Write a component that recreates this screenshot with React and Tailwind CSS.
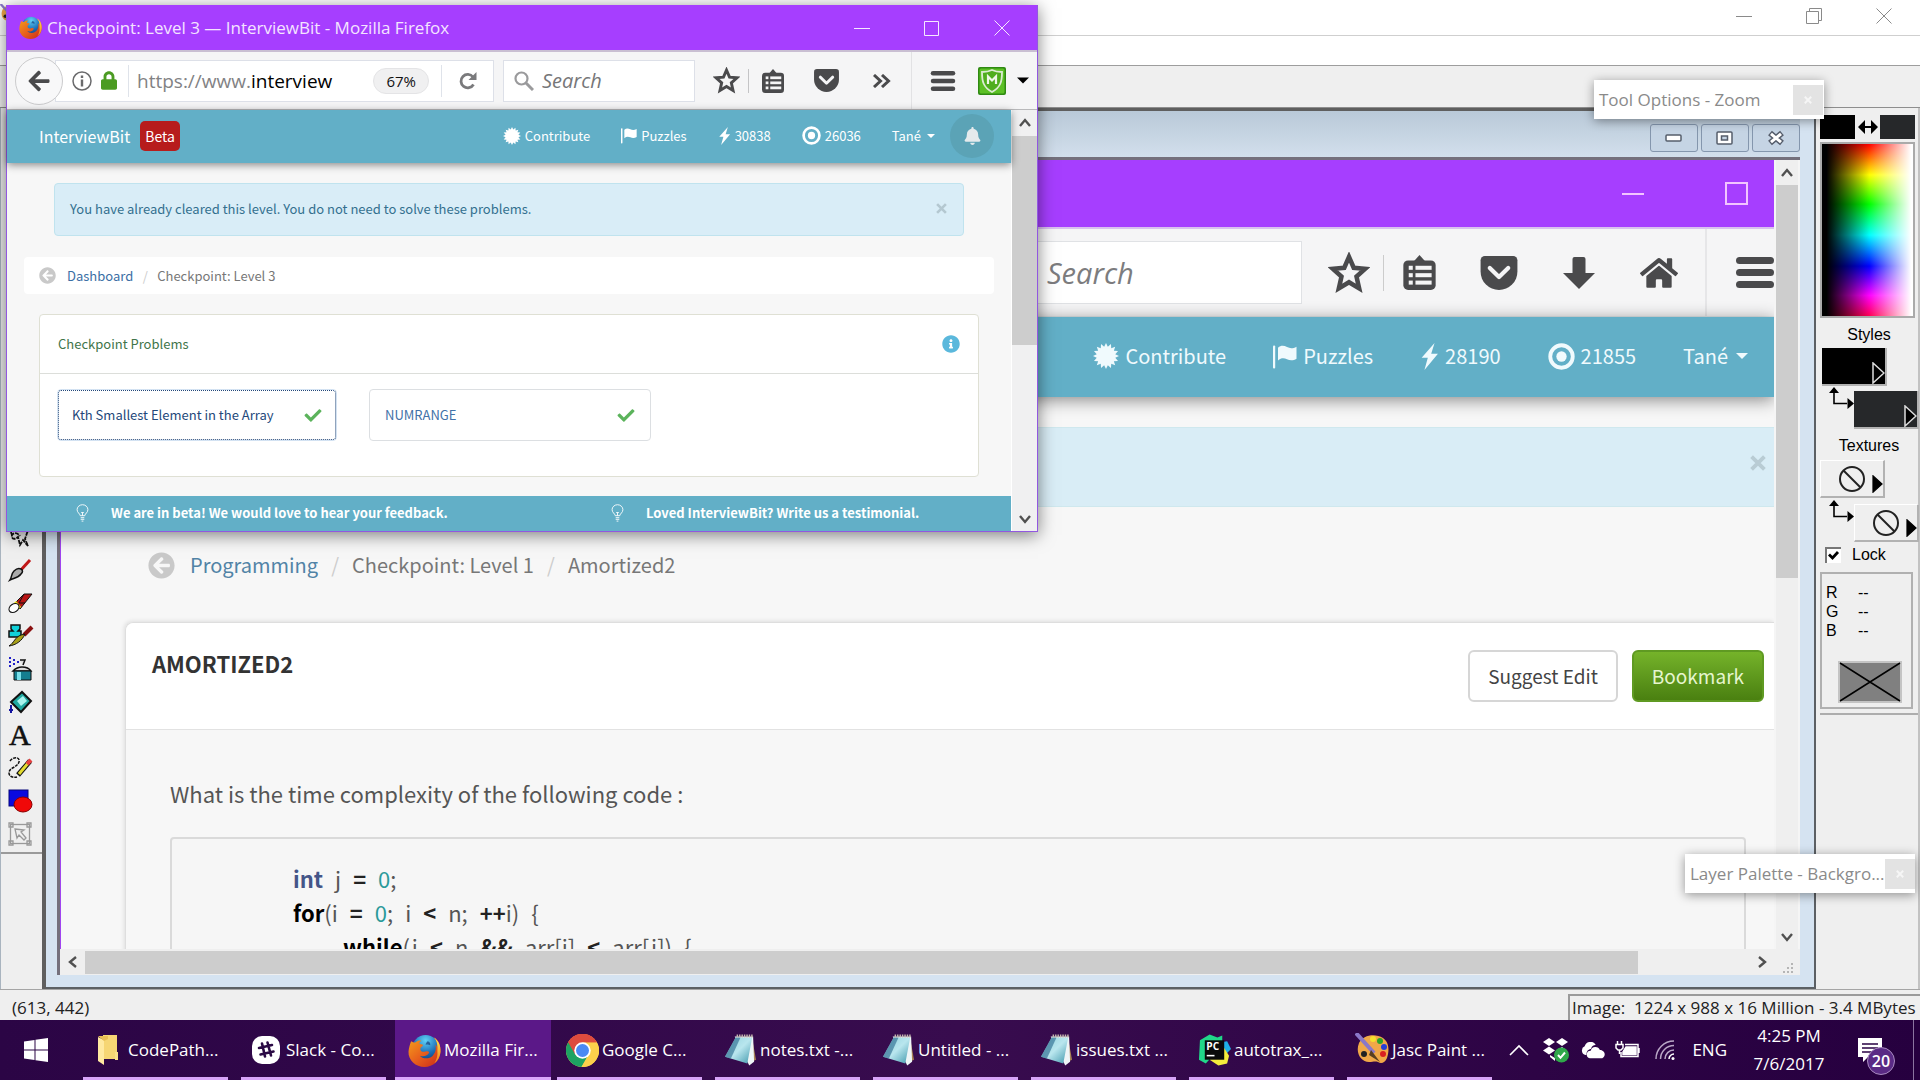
import React from "react";
import { FaBell, FaCheck, FaInfoCircle, FaLock, FaArrowLeft, FaArrowCircleLeft, FaHome } from "react-icons/fa";

const UI = "font-['Open_Sans','Noto_Sans',sans-serif]";
const SITE = "font-['Noto_Sans_CJK_SC','Open_Sans',sans-serif]";
const CLASSIC = "font-['Liberation_Sans',sans-serif]";

/* ---------- icons ---------- */

const burst = Array.from({ length: 32 }, (_, i) => {
  const r = i % 2 ? 8 : 11;
  const a = (i * Math.PI) / 16;
  return `${(12 + r * Math.sin(a)).toFixed(2)},${(12 - r * Math.cos(a)).toFixed(2)}`;
}).join(" ");

function Burst({ className }) {
  return (
    <svg viewBox="1 1 22 22" className={className} fill="currentColor" aria-hidden="true">
      <polygon points={burst} />
    </svg>
  );
}

function Flag({ className }) {
  return (
    <svg viewBox="0 0 24 24" className={className} fill="currentColor" aria-hidden="true">
      <rect x="0" y="1" width="2.2" height="23" rx="1" />
      <path d="M5 3.200C8 .6 11 1 14 2.600c3 1.600 6 1.600 9.500-.4v12c-3 2-6.500 2-9.500.6-3-1.400-6-1.400-9 1.200z" />
    </svg>
  );
}

function Bolt({ className }) {
  return (
    <svg viewBox="0 0 16 24" className={className} fill="currentColor" aria-hidden="true">
      <path d="M12.500 0 1 13h5.500L3.500 24 15.500 9.500H9.500z" />
    </svg>
  );
}

function Target({ className }) {
  return (
    <svg viewBox="0 0 24 24" className={className} aria-hidden="true">
      <circle cx="12" cy="12" r="10" fill="none" stroke="currentColor" strokeWidth="3.400" />
      <circle cx="12" cy="12" r="4.600" fill="currentColor" />
    </svg>
  );
}

function Caret({ className }) {
  return (
    <svg viewBox="0 0 12 6" className={className} fill="currentColor" aria-hidden="true">
      <path d="M0 0h12L6 6z" />
    </svg>
  );
}

function Bulb() {
  return (
    <svg viewBox="0 0 14 20" className="h-[18px] w-[13px] shrink-0" fill="none" stroke="white" strokeWidth="1" aria-hidden="true">
      <path d="M4.500 13C4 10.500 1 9.500 1 6.300a6 5.500 0 0 1 12 0C13 9.500 10 10.500 9.500 13zM5.500 9.500h3M7 9.500V13M5 15.200h4M5 17h4M6 19h2" />
    </svg>
  );
}

function Star({ className }) {
  return (
    <svg viewBox="0 0 24 24" className={className} fill="none" stroke="currentColor" strokeWidth="2.600" aria-hidden="true">
      <path d="M12 2.800 14.700 9l6.600.6-5 4.500 1.500 6.700L12 17.300l-5.800 3.500 1.500-6.700-5-4.500L9.300 9z" />
    </svg>
  );
}

function ListIcon({ className }) {
  return (
    <svg viewBox="0 0 24 26" className={className} aria-hidden="true">
      <path d="M8 4.500 12 0l4 4.500z" fill="currentColor" />
      <rect x="0" y="4" width="24" height="22" rx="3.500" fill="currentColor" />
      <g fill="#f5f5f6">
        <rect x="4" y="8" width="3" height="3" /><rect x="9" y="8" width="12" height="3" />
        <rect x="4" y="13.500" width="3" height="3" /><rect x="9" y="13.500" width="12" height="3" />
        <rect x="4" y="19" width="3" height="3" /><rect x="9" y="19" width="12" height="3" />
      </g>
    </svg>
  );
}

function Pocket({ className }) {
  return (
    <svg viewBox="0 0 26 24" className={className} aria-hidden="true">
      <path d="M3 0h20a3 3 0 0 1 3 3v8a13 13 0 0 1-26 0V3a3 3 0 0 1 3-3z" fill="currentColor" />
      <path d="m6.500 8.500 6.500 6.300 6.500-6.300" fill="none" stroke="#f5f5f6" strokeWidth="3" strokeLinecap="round" strokeLinejoin="round" />
    </svg>
  );
}

function Burger({ className }) {
  return (
    <svg viewBox="0 0 38 31" className={className} fill="currentColor" aria-hidden="true">
      <rect width="38" height="7" rx="3.500" /><rect y="12" width="38" height="7" rx="3.500" /><rect y="24" width="38" height="7" rx="3.500" />
    </svg>
  );
}

function Chevron({ dir = "up", className = "h-3 w-3" }) {
  const d = { up: "M1 9 6 3l5 6", down: "M1 3l5 6 5-6", left: "M9 1 3 6l6 5", right: "M3 1l6 5-6 5" }[dir];
  return (
    <svg viewBox="0 0 12 12" className={className} fill="none" stroke="#505050" strokeWidth="2.400" aria-hidden="true">
      <path d={d} />
    </svg>
  );
}

function Firefox({ className }) {
  return (
    <svg viewBox="0 0 32 32" className={className} aria-hidden="true">
      <defs>
        <radialGradient id="ffGlobe" cx=".5" cy=".2" r=".8"><stop offset="0" stopColor="#5fd0f5" /><stop offset=".6" stopColor="#1c6fb8" /><stop offset="1" stopColor="#123a78" /></radialGradient>
        <linearGradient id="ffFox" x1="0" y1="0" x2="1" y2="1"><stop offset="0" stopColor="#f4a01c" /><stop offset=".5" stopColor="#e8601c" /><stop offset="1" stopColor="#c8281a" /></linearGradient>
        <linearGradient id="ffTail" x1="0" y1="0" x2="0" y2="1"><stop offset="0" stopColor="#ffe34d" /><stop offset="1" stopColor="#f0801c" /></linearGradient>
      </defs>
      <circle cx="17" cy="14" r="13" fill="url(#ffGlobe)" />
      <path d="M3 7c1.500 1 3 1.500 4 1.300C9 6.500 11 6 13 6.500c-1.500 1-2 2-2 3l3.500 1c.5 1-1.500 2-2.500 3-.5 3 2 4.500 5 3.500 2-.7 3.500 0 3.500 1-1.500 3.500-6 4.500-9 3 3 3.500 9 3.500 12.500 0 3-3 3.500-7 2.500-10.500 1.500 1 2 2.500 2.500 4C29 9 27.500 6 25 3.500c4.500 2.500 7 8 6.500 14C31 26 24.500 32 16 32S0 25.500.5 17C.8 13 2 10 3 7z" fill="url(#ffFox)" />
      <path d="M25 3.500c4.500 2.500 7 8 6.500 14-.4 4.500-2.500 8.500-6 11 2.500-4 3.500-8 3-12C29 9 27.500 6 25 3.500z" fill="url(#ffTail)" />
      <path d="M19 7c2 .5 3 2 2.500 4-1.500-1-3-1-4.500-.5.500-1.500 1-2.500 2-3.500z" fill="#163f7d" opacity=".7" />
    </svg>
  );
}

function Chrome({ className }) {
  return (
    <svg viewBox="0 0 32 32" className={className} aria-hidden="true">
      <circle cx="16" cy="16" r="16" fill="#fcd04b" />
      <path d="M16 16 2.100 8A16 16 0 0 1 29.900 8z" fill="#dd4b3e" />
      <path d="M2.100 8A16 16 0 0 0 15 32l7-12.500-6-3.500z" fill="#1da362" />
      <path d="M16 8h13.900A16 16 0 0 1 15 32l7.500-12z" fill="#fcd04b" />
      <path d="M2.100 8 9 20l7-12h13.900A16 16 0 0 0 2.100 8z" fill="#dd4b3e" />
      <circle cx="16" cy="16" r="8" fill="#fff" /><circle cx="16" cy="16" r="6.300" fill="#4a8af4" />
    </svg>
  );
}

function Folder() {
  return (
    <svg viewBox="0 0 20 30" className="h-[30px] w-5" aria-hidden="true">
      <path d="M5 0h14v24H5z" fill="#f6d674" /><path d="M0 2l6 3v25l-6-4z" fill="#ffe9a0" /><path d="M0 1h10v3l-4 2z" fill="#e8bf55" /><path d="M17 17h3v8h-3z" fill="#fbe08a" />
    </svg>
  );
}

function Slack() {
  return (
    <svg viewBox="0 0 28 28" className="h-7 w-7" aria-hidden="true">
      <rect width="28" height="28" rx="10" fill="#fff" />
      <g stroke="#2b0a45" strokeWidth="2.600" strokeLinecap="round"><path d="M10 7.500 13 20.500M15.500 6.500 19 19.500M7 12l13-3M8.500 18.500l13-3" /></g>
    </svg>
  );
}

function Notepad() {
  return (
    <svg viewBox="0 0 34 32" className="h-8 w-[33px]" aria-hidden="true">
      <defs><linearGradient id="np" x1="0" y1="0" x2="1" y2="1"><stop offset="0" stopColor="#8fd0dc" /><stop offset=".5" stopColor="#b9e6ee" /><stop offset="1" stopColor="#3f97ac" /></linearGradient></defs>
      <path d="M29 4l4 22-6 3z" fill="#a98255" /><path d="M11 2h19l1 26-5 4z" fill="#eef5f7" /><path d="M12 3h17L24 30 1 23z" fill="url(#np)" /><path d="M12 3 1 23l6 2L17 3z" fill="#2f6f92" opacity=".65" /><path d="M13 1.500h17" stroke="#c4b8ae" strokeWidth="3" strokeDasharray="1.500 1" />
    </svg>
  );
}

function PyCharm() {
  return (
    <svg viewBox="0 0 34 32" className="h-8 w-[33px]" aria-hidden="true">
      <path d="M2 6 12 0l8 3 5-2v10L8 30l-7-4z" fill="#21d789" /><path d="M24 8l6-1 4 8-5 5z" fill="#1fb0e8" /><path d="M12 26 27 14l5 8-2 8-9 2z" fill="#f5ec3c" />
      <rect x="7" y="6" width="20" height="20" fill="#0a0a0a" />
      <text x="8.500" y="16" fontSize="10.500" fontWeight="700" fill="#fff" fontFamily="Open Sans">PC</text>
      <rect x="9" y="21" width="8" height="1.600" fill="#fff" />
    </svg>
  );
}

function Palette({ className = "h-[34px] w-[34px]" }) {
  return (
    <svg viewBox="0 0 34 34" className={className} aria-hidden="true">
      <path d="M4 10C8 2 20 0 28 5c7 5 6 14 4 20-2 5-6 6-9 4-3-1-5 0-9 0C6 29 0 20 4 10z" fill="#f0a848" />
      <circle cx="18" cy="6" r="3" fill="#f4e02c" /><circle cx="25" cy="8" r="3" fill="#2aa52a" /><circle cx="29" cy="14" r="3" fill="#2440d8" /><circle cx="28" cy="21" r="3" fill="#d82020" /><circle cx="9" cy="21" r="3" fill="#222" />
      <path d="M1 0 19 20" stroke="#8a78c8" strokeWidth="4" /><path d="M16 17l9 12-11-7z" fill="#5a4020" />
    </svg>
  );
}

/* ---------- shared pieces ---------- */

function WinControls({ restore, className = "", tone }) {
  const box = "flex h-full w-[70px] items-center justify-center";
  return (
    <div className={`flex h-full ${tone} ${className}`}>
      <button aria-label="Minimize" className={box}><svg viewBox="0 0 16 16" className="h-4 w-4" stroke="currentColor"><path d="M0 8.500h16" /></svg></button>
      <button aria-label="Maximize" className={box}>
        <svg viewBox="0 0 16 16" className="h-4 w-4" stroke="currentColor" fill="none">
          {restore ? <path d="M.5 3.500h12v12H.5zM3.500 3.500v-3h12v12h-3" /> : <path d="M.5 1.500h14v14H.5z" />}
        </svg>
      </button>
      <button aria-label="Close" className={box}><svg viewBox="0 0 16 16" className="h-4 w-4" stroke="currentColor"><path d="m.5.5 15 15M15.500.5l-15 15" /></svg></button>
    </div>
  );
}

function NavItem({ icon, label, big }) {
  return (
    <a href="#" className={big ? "flex items-center gap-1.5" : "flex items-center gap-1"}>
      {icon}
      <span>{label}</span>
    </a>
  );
}

function Cross({ className }) {
  return (
    <svg viewBox="0 0 10 10" className={className} stroke="currentColor" strokeWidth="2.400" aria-hidden="true"><path d="m1 1 8 8M9 1 1 9" /></svg>
  );
}

/* ---------- Firefox window ---------- */

function FirefoxWindow() {
  return (
    <section className="absolute left-[6px] top-[5px] flex h-[527px] w-[1032px] flex-col border border-t-0 border-[#9257e0] bg-[#f7f7f7] shadow-[0_3px_16px_rgba(0,0,0,0.5)]">
      <header className="flex h-[47px] shrink-0 items-center border-b-2 border-[#c9bfd2] bg-[#a63eff] pl-3">
        <Firefox className="h-[23px] w-[23px]" />
        <h1 className={`ml-[5px] flex-1 text-[17px] leading-6 text-[#f4e4ff] ${UI}`}>Checkpoint: Level 3 — InterviewBit - Mozilla Firefox</h1>
        <WinControls tone="text-[#f6e8ff]" />
      </header>

      <div className={`flex h-[58px] shrink-0 items-center border-b border-[#b9b9bb] bg-[#f5f5f6] text-[#4a4a4c] ${UI}`}>
        <button aria-label="Back" className="z-10 ml-2 flex h-12 w-12 items-center justify-center rounded-full border border-[#cbcbcd] bg-[#f8f8f9]">
          <FaArrowLeft className="h-6 w-6" />
        </button>
        <div className="-ml-2 flex h-[42px] w-[439px] items-center border border-[#dde0e8] bg-white pl-[16px]">
          <svg viewBox="0 0 20 20" className="h-5 w-5 text-[#6a6a6c]" fill="none" stroke="currentColor" aria-hidden="true"><circle cx="10" cy="10" r="9" strokeWidth="1.500" /><path d="M10 4.500v2.500M10 8.500v7" strokeWidth="2.400" /></svg>
          <FaLock className="ml-[9px] h-[19px] w-4 text-[#4b9b22]" />
          <span className="ml-[11px] h-[32px] w-px bg-[#dfe3ea]" />
          <span className="ml-2 flex-1 text-[19px] leading-7 text-[#828284]">https://www.<span className="text-black">interview</span></span>
          <span className="rounded-full border border-[#e4e4e6] bg-[#f0f0f1] px-3 text-[15px] leading-6 text-[#111]">67%</span>
          <span className="ml-3 h-[32px] w-px bg-[#dfe3ea]" />
          <button aria-label="Reload" className="flex w-[51px] justify-center">
            <svg viewBox="0 0 18 18" className="h-[18px] w-[18px] text-[#7a7a7c]" fill="none" stroke="currentColor" strokeWidth="2.800" aria-hidden="true"><path d="M14.500 12.500A6.700 6.700 0 1 1 14 5" /><path d="M17.500 0v8h-8z" fill="currentColor" stroke="none" /></svg>
          </button>
        </div>
        <label className="ml-[9px] flex h-[42px] w-[192px] items-center border border-[#dde0e8] bg-white pl-[10px]">
          <svg viewBox="0 0 20 20" className="h-5 w-5 shrink-0" fill="none" stroke="#9a9a9c" aria-hidden="true"><circle cx="7.500" cy="7.500" r="6" strokeWidth="2.200" /><path d="m12 12 7 7" strokeWidth="3" /></svg>
          <input aria-label="Search the web" placeholder="Search" className="ml-2 w-full bg-transparent text-[20px] italic leading-7 outline-none placeholder:text-[#767678]" />
        </label>
        <button aria-label="Bookmark this page" className="flex w-[53px] justify-center pl-2.5"><Star className="h-[27px] w-[27px]" /></button>
        <span className="h-6 w-px bg-[#c4c4c6]" />
        <button aria-label="Bookmarks list" className="flex w-12 justify-center"><ListIcon className="h-6 w-[22px]" /></button>
        <button aria-label="Pocket" className="flex w-[58px] justify-center"><Pocket className="h-[23px] w-[25px]" /></button>
        <button aria-label="More tools" className="flex w-[56px] justify-center pr-0.5">
          <svg viewBox="0 0 18 14" className="h-[14px] w-[18px]" fill="none" stroke="currentColor" strokeWidth="3" aria-hidden="true"><path d="m1 1 6.500 6L1 13M9 1l6.500 6L9 13" /></svg>
        </button>
        <span className="h-full w-px bg-[#e2e2e4]" />
        <button aria-label="Menu" className="ml-[18px]"><Burger className="h-5 w-[26px]" /></button>
        <button aria-label="Site advisor" className="ml-[22px]">
          <svg viewBox="0 0 28 28" className="h-7 w-7" aria-hidden="true">
            <rect width="28" height="28" rx="2" fill="#2f8a12" /><rect x="1.500" y="1.500" width="25" height="25" rx="1.500" fill="#5cc025" />
            <path d="M14 3c3 1.500 6 2 10 2 0 9-1 15-10 20C5 20 4 14 4 5c4 0 7-.5 10-2z" fill="#4fae1e" stroke="#dcebd3" strokeWidth="1.800" />
            <path d="M10 17V9.500l4 4 4-4V17" fill="none" stroke="#eef7e8" strokeWidth="2.200" />
          </svg>
        </button>
        <Caret className="ml-[11px] h-[7px] w-3 text-black" />
      </div>

      <div className="flex min-h-0 flex-1">
        <div className={`flex min-w-0 flex-1 flex-col text-[13px] leading-5 ${SITE}`}>
          <nav className="z-10 flex h-[53px] shrink-0 items-center bg-[#62afc7] pb-0.5 pl-8 pr-[17px] text-white shadow-[0_2px_8px_rgba(0,0,0,0.45)]">
            <a href="#" className="text-[16px]">InterviewBit</a>
            <span className="ml-2.5 rounded-[5px] bg-[#b71c1c] px-[5px] text-[14px] leading-[30px]">Beta</span>
            <div className="ml-auto flex items-center gap-[31px]">
              <NavItem icon={<Burst className="h-[18px] w-[18px]" />} label="Contribute" />
              <NavItem icon={<Flag className="h-[17px] w-4" />} label="Puzzles" />
              <NavItem icon={<Bolt className="h-[18px] w-[13px]" />} label="30838" />
              <NavItem icon={<Target className="h-[19px] w-[19px]" />} label="26036" />
              <button className="flex items-center gap-1.5">Tané<Caret className="h-1 w-2" /></button>
            </div>
            <button aria-label="Notifications" className="ml-[15px] flex h-11 w-11 items-center justify-center rounded-full bg-[#5ba3b6]"><FaBell className="h-[18px] w-[17px] text-[#e4eaec]" /></button>
          </nav>

          <div className="mx-[47px] mt-5 flex h-[53px] shrink-0 items-center rounded border border-[#c0e3ee] bg-[#d9edf7] pb-0.5 pl-[15px] pr-4 text-[#33708f]">
            <p className="flex-1">You have already cleared this level. You do not need to solve these problems.</p>
            <button aria-label="Dismiss" className="text-[#b4c8d1]"><Cross className="h-[11px] w-[11px]" /></button>
          </div>

          <div className="mx-[17px] mt-[21px] flex h-[37px] shrink-0 items-center rounded bg-white pl-[15px] text-[#777]">
            <FaArrowCircleLeft className="h-[17px] w-[17px] text-[#c9c9c9]" />
            <a href="#" className="ml-[11px] text-[#3b6fa5]">Dashboard</a>
            <span className="w-6 text-center text-[#ccc]">/</span>
            <span>Checkpoint: Level 3</span>
          </div>

          <div className="ml-8 mr-8 mt-5 h-[163px] shrink-0 rounded border border-[#dfe0d4] bg-white">
            <div className="flex h-[59px] items-center border-b border-[#dcdeda] pl-[18px] pr-[18px]">
              <h2 className="flex-1 text-[#41754a]">Checkpoint Problems</h2>
              <FaInfoCircle className="h-[18px] w-[18px] text-[#5bb8dc]" />
            </div>
            <div className="flex gap-8 px-[17px] pt-[15px]">
              {["Kth Smallest Element in the Array", "NUMRANGE"].map((t, i) => (
                <a key={t} href="#" className={i ? "flex h-[52px] w-[282px] items-center rounded border border-[#dcdfe2] px-[15px] text-[#4272a8]" : "flex h-[52px] w-[280px] items-center rounded border border-[#d3e2f2] px-3.5 text-[#23487a] outline-dotted outline-1 -outline-offset-2 outline-[#23487a]"}>
                  <span className="flex-1">{t}</span>
                  <FaCheck className="h-[17px] w-[18px] text-[#5bb35b]" />
                </a>
              ))}
            </div>
          </div>

          <footer className="mt-auto flex h-[35px] shrink-0 items-center bg-[#62afc7] pb-0.5 pl-[69px] font-bold text-white">
            <a href="#" className="flex w-[535px] items-center gap-[22px]"><Bulb />We are in beta! We would love to hear your feedback.</a>
            <a href="#" className="flex items-center gap-[22px]"><Bulb />Loved InterviewBit? Write us a testimonial.</a>
          </footer>
        </div>

        <div className="flex w-[26px] flex-col items-center border-l border-white bg-[#f0f0f1]">
          <div className="flex h-[26px] items-center"><Chevron /></div>
          <div className="h-[209px] w-full bg-[#cdcdcd]" />
          <div className="mt-auto flex h-6 items-center"><Chevron dir="down" /></div>
        </div>
      </div>
    </section>
  );
}

/* ---------- Paint Shop Pro document window ---------- */

function CodeLine({ parts, className = "" }) {
  const tone = { k: "font-bold text-black", t: "font-bold text-[#445588]", n: "text-[#2a9a9a]", o: "font-bold text-[#222]" };
  return (
    <div className={`flex gap-3 ${className}`}>
      {parts.map((w, i) => (
        <span key={i}>{w.map(([s, c], j) => <span key={j} className={tone[c] || "text-[#555]"}>{s}</span>)}</span>
      ))}
    </div>
  );
}

function DocumentWindow() {
  const mdi = "flex h-7 w-12 items-center justify-center rounded-[3px] border border-[#8496ad] bg-[#c5d4e4]";
  return (
    <section className="flex min-h-0 flex-1 flex-col border-b-2 border-r-2 border-[#5c6064] bg-[#d5e3f1] pb-3 pl-[11px] pr-3.5">
      <header className="flex h-[46px] shrink-0 items-end justify-end gap-[3px] bg-gradient-to-b from-[#b9c9d8] to-[#d2dfec] pb-[5px]">
        <button aria-label="Minimize document" className={mdi}><svg viewBox="0 0 18 8" className="h-2 w-[18px]"><rect x="1" y="1" width="15" height="6" rx="1" fill="#fff" stroke="#555d6b" strokeWidth="1.500" /></svg></button>
        <button aria-label="Restore document" className={mdi}><svg viewBox="0 0 18 14" className="h-3.5 w-[18px]"><rect x="1" y="1" width="15" height="12" rx="1" fill="#fff" stroke="#555d6b" strokeWidth="1.500" /><rect x="5.500" y="5" width="6" height="4" fill="#c5d4e4" stroke="#555d6b" strokeWidth="1.500" /></svg></button>
        <button aria-label="Close document" className={mdi}><svg viewBox="0 0 18 16" className="h-4 w-[18px]"><path d="m3 3 12 10M15 3 3 13" stroke="#555d6b" strokeWidth="6" /><path d="m4 3.800 10 8.400M14 3.800 4 12.200" stroke="#fff" strokeWidth="3" /></svg></button>
      </header>

      <div className="flex min-h-0 flex-1 flex-col border-l-[3px] border-t-[3px] border-[#74707c] bg-[#efefef]">
        <div className="flex min-h-0 flex-1">
          <div className={`flex min-w-0 flex-1 flex-col overflow-hidden border-l border-[#a044f0] bg-[#f7f7f7] ${SITE}`}>
            <div className="flex h-[69px] shrink-0 items-center justify-end gap-[81px] border-b-2 border-[#d9c2ee] bg-[#a63eff] pr-[26px]">
              <span className="h-0.5 w-[22px] bg-[#f2c4ff]" />
              <span className="h-[23px] w-[23px] border-2 border-[#f2c4ff]" />
            </div>
            <div className={`flex h-[88px] shrink-0 items-center justify-end border-b border-[#e3eaec] bg-[#f5f5f6] text-[#4a4a4c] ${UI}`}>
              <div className="h-[63px] w-[420px] border border-[#e0e2e5] bg-white pl-[164px] text-[29px] italic leading-[62px] text-[#7c7c7e]">Search</div>
              <span className="flex w-[81px] justify-center pl-3"><Star className="h-[42px] w-[42px]" /></span>
              <span className="h-9 w-px bg-[#ccc]" />
              <span className="flex w-[75px] justify-center pr-1"><ListIcon className="h-[35px] w-[33px]" /></span>
              <span className="flex w-20 justify-center"><Pocket className="h-[34px] w-[38px]" /></span>
              <span className="flex w-20 justify-center"><svg viewBox="0 0 32 32" className="h-8 w-8" fill="currentColor"><path d="M9.500 2a2 2 0 0 1 2-2h9a2 2 0 0 1 2 2v14H32L16 32 0 16h9.500z" /></svg></span>
              <span className="flex w-20 justify-center"><FaHome className="h-[38px] w-[38px]" /></span>
              <span className="ml-1.5 h-full w-0.5 bg-[#e6e6e8]" />
              <Burger className="ml-[29px] h-[31px] w-[38px]" />
            </div>
            <nav className="z-[1] flex h-20 shrink-0 items-center justify-end gap-[47px] bg-[#62afc7] pb-0.5 pr-[26px] text-[20px] text-[#f0fafd] shadow-[0_3px_16px_rgba(0,0,0,0.45)]">
              <NavItem big icon={<Burst className="h-[26px] w-[26px]" />} label="Contribute" />
              <NavItem big icon={<Flag className="h-[25px] w-6" />} label="Puzzles" />
              <NavItem big icon={<Bolt className="h-[27px] w-[19px]" />} label="28190" />
              <NavItem big icon={<Target className="h-[27px] w-[27px]" />} label="21855" />
              <span className="flex items-center gap-2">Tané<Caret className="h-1.5 w-3" /></span>
            </nav>
            <div className="mt-[30px] flex h-[80px] shrink-0 items-center justify-end border-y border-[#cfe8ee] bg-[#d9edf6] pb-2 pr-2 text-[#b9ccd4]"><Cross className="h-4 w-4" /></div>

            <div className="mt-[42px] flex h-8 shrink-0 items-center pl-[87px] text-[20px] leading-8 text-[#777]">
              <FaArrowCircleLeft className="h-[27px] w-[27px] text-[#c9c9c9]" />
              <a href="#" className="ml-[15px] text-[#5183a6]">Programming</a>
              <span className="w-[34px] text-center text-[#ccc]">/</span>
              <span>Checkpoint: Level 1</span>
              <span className="w-[34px] text-center text-[#ccc]">/</span>
              <span>Amortized2</span>
            </div>

            <article className="ml-[64px] mt-[41px] flex-1 rounded-tl-lg border-l border-t border-[#dedede] shadow-[-1px_-1px_4px_rgba(0,0,0,0.1)]">
              <header className="flex h-[107px] items-center rounded-tl-lg border-b border-[#e2e2e2] bg-white pl-[26px] pr-2.5">
                <h2 className="flex-1 self-start pt-6 text-[22px] font-bold leading-8 text-[#333]">AMORTIZED2</h2>
                <button className="h-[52px] rounded-md border-2 border-[#d6d6d6] px-[18px] text-[19px] text-[#444]">Suggest Edit</button>
                <button className="ml-3.5 h-[52px] rounded-md border-2 border-[#5f9a22] bg-gradient-to-b from-[#75b32a] to-[#4a8010] px-[18px] text-[19px] text-[#e6f5cf]">Bookmark</button>
              </header>
              <p className="pl-[44px] pt-[47px] text-[22px] leading-8 text-[#555]">What is the time complexity of the following code :</p>
              <div className="ml-[44px] mr-[28px] mt-[28px] h-40 rounded-t border-2 border-[#dadada] bg-[#f6f6f6] pl-[121px] pt-[22px] text-[22px] leading-[34px]">
                <CodeLine parts={[[["int", "t"]], [["j"]], [["=", "o"]], [["0", "n"], [";"]]]} />
                <CodeLine parts={[[["for", "k"], ["(i"]], [["=", "o"]], [["0", "n"], [";"]], [["i"]], [["<", "o"]], [["n;"]], [["++", "o"], ["i)"]], [["{"]]]} />
                <CodeLine className="pl-[50px]" parts={[[["while", "k"], ["(j"]], [["<", "o"]], [["n"]], [["&&", "o"]], [["arr[i]"]], [["<", "o"]], [["arr[j])"]], [["{"]]]} />
              </div>
            </article>
          </div>
          <div className="flex w-[26px] flex-col items-center border-x-2 border-[#f5f5f5] bg-[#efefef]">
            <div className="flex h-[25px] items-center"><Chevron /></div>
            <div className="h-[393px] w-full bg-[#cdcdcd]" />
            <div className="mt-auto flex h-6 items-center"><Chevron dir="down" /></div>
          </div>
        </div>
        <div className="flex h-[26px] shrink-0 items-center">
          <div className="flex w-[25px] justify-center"><Chevron dir="left" /></div>
          <div className="h-[23px] w-[1553px] bg-[#cdcdcd]" />
          <div className="ml-auto mr-3.5"><Chevron dir="right" /></div>
          <svg viewBox="0 0 12 12" className="mr-1.5 h-3 w-3 self-end" fill="#b5b5b5" aria-hidden="true"><path d="M9 0h2v2H9zM9 4h2v2H9zM5 4h2v2H5zM9 8h2v2H9zM5 8h2v2H5zM1 8h2v2H1z" /></svg>
        </div>
      </div>
    </section>
  );
}

/* ---------- palettes ---------- */

const tools = [
  ["Freehand", <path key="a" d="M4 10c-3-5 2-9 8-7 5-3 9 1 7 5l-2 6 3 7-5-6-3 5-2-8c-3 3-7 2-6-2 2-3 6-2 8 1" fill="none" stroke="#111" strokeWidth="1.800" strokeDasharray="4 1" />],
  ["Paint Brush", <g key="a"><path d="M22 2 12 13" stroke="#c01818" strokeWidth="3" /><path d="M13 11c2 1 2 3 0 5-3 4-7 4-11 6 2-3 1-6 4-9 2-2 5-3 7-2z" fill="#aaa" stroke="#111" strokeWidth="1.500" /></g>],
  ["Eraser", <g key="a"><path d="m7 12 9-9h8L12 18z" fill="#b81414" stroke="#111" /><path d="m16 3-5 9 6 0" stroke="#111" fill="none" /><path d="m7 11 5 6" stroke="#e8e020" strokeWidth="3" /><ellipse cx="6" cy="17" rx="5.500" ry="4" transform="rotate(-35 6 17)" fill="#fff" stroke="#111" /></g>],
  ["Clone Brush", <g key="a"><path d="M3 1h9v4l-2 2h3v6H1V7h4L3 5z" fill="#10d0d8" stroke="#111" strokeWidth="1.500" /><path d="m24 3-8 8" stroke="#8a1010" strokeWidth="4" /><path d="M17 10c-3 7-9 11-16 12 5-3 6-9 12-11z" fill="#a8a018" stroke="#111" /></g>],
  ["Airbrush", <g key="a"><path d="M1 1h2M1 5h2M1 9h2M5 3h2M5 7h2M9 5h2" stroke="#2020c8" strokeWidth="1.800" /><path d="M12 3h5l-2 5M5 14c3-3 5-4 9-4s7 1 9 4z" fill="#ddd" stroke="#111" strokeWidth="1.500" /><path d="M6 14h17v9H6z" fill="#157f90" stroke="#111" /><path d="M9 15h4v8H9z" fill="#7ae0ea" /></g>],
  ["Flood Fill", <g key="a"><path d="m3 12 11-10 9 9-10 11z" fill="#20a8a0" stroke="#111" strokeWidth="2" /><path d="m9 11 6-5 4 5-6 5z" fill="#a8f4ee" /><path d="M3 15v8M1 20h4" stroke="#1414a0" strokeWidth="2" /></g>],
  ["Text", <text key="a" x="1" y="22" fontSize="30" fontFamily="Liberation Serif" fill="#111" stroke="#111" strokeWidth=".6">A</text>],
  ["Draw", <g key="a"><path d="M2 5c5-6 12-3 8 3-3 4-9 4-9 9 0 4 5 5 8 4" fill="none" stroke="#111" strokeWidth="1.500" strokeDasharray="3 1" /><path d="M22 5 10 19" stroke="#111" strokeWidth="5" /><path d="M21 6 11 18" stroke="#e4dc30" strokeWidth="3" /><path d="m23 4-4 4" stroke="#e84040" strokeWidth="4" /></g>],
  ["Preset Shapes", <g key="a"><rect x="1" y="1" width="19" height="16" fill="#0a0ae0" stroke="#06067a" /><ellipse cx="15" cy="15.500" rx="9" ry="7.500" fill="#f00808" stroke="#800" /></g>],
  ["Object Selector", <g key="a" fill="none" stroke="#999" strokeWidth="1.300"><rect x="2.500" y="2.500" width="19" height="19" /><path d="M1 1h4v4H1zM19 1h4v4h-4zM1 19h4v4H1zM19 19h4v4h-4zM7 7l9 1-3 2 5 6-2 2-5-5-2 3z" /></g>],
];

function ToolPalette() {
  return (
    <aside className="flex w-[42px] shrink-0 flex-col border-l border-[#a9b4bf] bg-[#efefef]">
      <div className="flex flex-col items-center gap-[9px] border-b-2 border-[#9a9a9a] pb-[6px] pl-0 pr-1 pt-[417px]">
        {tools.map(([name, art]) => (
          <button key={name} aria-label={name} className="h-6 w-6"><svg viewBox="0 0 24 24" className="h-6 w-6 overflow-visible">{art}</svg></button>
        ))}
      </div>
    </aside>
  );
}

function SwapArrows() {
  return (
    <svg viewBox="0 0 26 24" className="h-6 w-[26px]" aria-hidden="true"><path d="M6 5v11.500h13" fill="none" stroke="#000" strokeWidth="1.600" /><path d="m6 0 5 6H1zM26 16.500 19.500 22V11z" /></svg>
  );
}

function StyleButton({ label, className, texture }) {
  return (
    <button aria-label={label} className={`flex h-[38px] w-[65px] items-end justify-end border-b-2 border-r-2 border-[#b2b2b2] ${className}`}>
      {texture && <svg viewBox="0 0 26 26" className="mb-1 mr-[7px] h-[26px] w-[26px]" fill="none" stroke="#222" strokeWidth="2"><circle cx="13" cy="13" r="12" /><path d="m4.500 4.500 17 17" /></svg>}
      <svg viewBox="0 0 13 22" className={texture ? "mb-[3px] h-[18px] w-[11px]" : "h-[22px] w-[13px]"}><path d="M1 1v20l11-10z" fill="#000" stroke={texture ? "#000" : "#ddd"} strokeWidth="1.500" /></svg>
    </button>
  );
}

function ColorPalette() {
  return (
    <aside className={`flex w-[104px] shrink-0 flex-col border-r-2 border-[#c2c2c2] bg-[#efefef] pl-1 pt-[7px] text-[16px] leading-5 text-black ${CLASSIC}`}>
      <div className="flex h-6 items-center justify-between pr-[3px]">
        <span className="h-6 w-[35px] bg-black" />
        <svg viewBox="0 0 20 14" className="h-3.5 w-5" aria-hidden="true"><path d="M0 7l7-7v14zM20 7l-7-7v14z" /><path d="M5 7h10" stroke="#000" strokeWidth="2" /></svg>
        <span className="h-6 w-[35px] bg-[#26282a]" />
      </div>
      <div className="mr-[3px] mt-[3px] h-[176px] border-2 border-[#aaa] bg-[linear-gradient(to_right,#000_0%,#000_5%,transparent_52%,#fff_98%),linear-gradient(to_bottom,#f00_0%,#ff0_18%,#0f0_35%,#0ff_53%,#00f_71%,#f0f_88%,#f05_100%)]" />
      <p className="mt-[7px] text-center">Styles</p>
      <StyleButton label="Foreground style" className="ml-[2px] mt-[3px] bg-black" />
      <div className="flex items-start"><span className="ml-2 mt-px"><SwapArrows /></span><span className="mt-[5px]"><StyleButton label="Background style" className="bg-[#26282a]" /></span></div>
      <p className="mt-[7px] text-center">Textures</p>
      <StyleButton label="Foreground texture" texture className="mt-1 border-l border-t border-l-white border-t-white" />
      <div className="flex items-start"><span className="ml-2 mt-[2px]"><SwapArrows /></span><span className="mt-[6px]"><StyleButton label="Background texture" texture className="border-l border-t border-l-white border-t-white" /></span></div>
      <label className="mt-[3px] flex items-center pl-[5px]">
        <span className="grid h-4 w-4">
          <input type="checkbox" defaultChecked className="peer col-start-1 row-start-1 h-4 w-4 appearance-none border-l-2 border-t-2 border-[#777] bg-white" />
          <svg viewBox="0 0 16 16" className="pointer-events-none col-start-1 row-start-1 hidden h-4 w-4 peer-checked:block" fill="none" stroke="#000" strokeWidth="2.800"><path d="m4 7.500 3.500 3.500L13 5" /></svg>
        </span>
        <span className="ml-[11px]">Lock</span>
      </label>
      <div className="mr-[5px] mt-[7px] flex h-[137px] flex-col border-2 border-[#b0b0b0] pl-1 pt-[9px]">
        {["R", "G", "B"].map((c) => (<div key={c} className="flex leading-[19px]"><span className="w-8">{c}</span><span>--</span></div>))}
        <svg viewBox="0 0 64 42" preserveAspectRatio="none" className="ml-3 mt-[21px] h-[42px] w-16"><rect x="1" y="1" width="62" height="40" fill="#808080" stroke="#c4c4c4" strokeWidth="2" /><path d="m2 2 60 38M62 2 2 40" stroke="#000" strokeWidth="1.500" /></svg>
      </div>
      <div className="mt-1 h-0.5 bg-[#adadad]" />
    </aside>
  );
}

function FloatingTitle({ children, className }) {
  return (
    <div className={`absolute flex h-[39px] w-[230px] items-center bg-white pl-[5px] pr-px text-[17px] text-[#8a8a8a] shadow-[0_2px_10px_rgba(0,0,0,0.4)] ${UI} ${className}`}>
      <span className="flex-1 whitespace-nowrap">{children}</span>
      <button aria-label="Close palette" className="flex h-[30px] w-[30px] shrink-0 items-center justify-center bg-[#e3e3e3] text-[#f6f6f6]"><Cross className="h-2 w-2" /></button>
    </div>
  );
}

/* ---------- taskbar ---------- */

const tasks = [
  ["CodePath...", <Folder key="i" />], ["Slack - Co...", <Slack key="i" />], ["Mozilla Fir...", <Firefox key="i" className="h-[33px] w-[33px]" />],
  ["Google C...", <Chrome key="i" className="h-[33px] w-[33px]" />], ["notes.txt -...", <Notepad key="i" />], ["Untitled - ...", <Notepad key="i" />],
  ["issues.txt ...", <Notepad key="i" />], ["autotrax_...", <PyCharm key="i" />], ["Jasc Paint ...", <Palette key="i" />],
];

function Taskbar() {
  return (
    <footer className={`flex h-[60px] shrink-0 items-stretch bg-gradient-to-r from-[#2b0545] via-[#380c4e] to-[#26003f] text-[17px] text-white ${UI}`}>
      <button aria-label="Start" className="flex w-[77px] items-center pl-6">
        <svg viewBox="0 0 24 24" className="h-6 w-6" fill="#fff"><path d="M0 3.500 10.500 2v9.500H0zM11.500 1.800 24 0v11.500H11.500zM0 12.500h10.500V22L0 20.500zM11.500 12.500H24V24l-12.500-1.800z" /></svg>
      </button>
      {tasks.map(([label, icon], i) => (
        <div key={label} className="flex w-[158px] shrink-0">
          <button className={i === 2 ? "ml-[2px] flex flex-1 items-center border-b-[3px] border-[#dba6fb] bg-[#5b1888] pl-3 pt-[3px]" : "ml-[6px] mr-[7px] flex flex-1 items-center border-b-[3px] border-[#d7a4f8] pl-2 pt-[3px]"}>
            <span className="flex w-[34px] shrink-0 justify-center">{icon}</span>
            <span className="ml-[3px] whitespace-nowrap">{label}</span>
          </button>
        </div>
      ))}
      <div className="ml-auto flex items-center">
        <svg viewBox="0 0 20 12" className="h-3 w-5" fill="none" stroke="#fff" strokeWidth="1.600"><path d="m1 11 9-9 9 9" /></svg>
        <svg viewBox="0 0 26 26" className="ml-[14px] h-[26px] w-[26px]"><path d="m6 1 6 4-6 4-6-4zM19 1l6 4-6 4-6-4zM6 9.500l6 4-6 4-6-4zM13 14l6-4 4 3-4 4z" fill="#fff" /><path d="m7 18 5 3v3l-5-4z" fill="#fff" /><circle cx="18.500" cy="18" r="7.500" fill="#2fa84a" /><path d="m15 18 2.500 2.800L22 15.500" fill="none" stroke="#fff" strokeWidth="2" /></svg>
        <svg viewBox="0 0 26 18" className="ml-3 h-[17px] w-6" fill="#fff"><path d="M5 14a5 5 0 0 1-1-9.500A6.500 6.500 0 0 1 16 3a5 5 0 0 0-5 4C7.500 7.500 5.500 10.500 6 14z" /><path d="M9.500 17.500a4.200 4.200 0 0 1 1-8.300 5.300 5.300 0 0 1 10-.7c2.500 0 5.200 1.700 5.200 4.700 0 2.500-2 4.300-4.200 4.300z" /></svg>
        <svg viewBox="0 0 26 18" className="ml-2.5 h-[18px] w-[26px]" fill="none" stroke="#fff" strokeWidth="1.500"><path d="M10 3.500h13v12H6V11M24 7v5" /><path d="M11 6h10v7.500H8V11z" fill="#fff" /><path d="M1 3.500h7V7L6 9H3L1 7zM2.500 0v3M6.500 0v3M4.500 9v4" /></svg>
        <svg viewBox="0 0 20 20" className="ml-[14px] h-5 w-5" fill="none" stroke="#b9a7c6" strokeWidth="1.500"><path d="M1 19A18 18 0 0 1 19 1M5.500 19A13.500 13.500 0 0 1 19 5.500M10 19a9 9 0 0 1 9-9" /><path d="M14 19a5 5 0 0 1 5-5" stroke="#fff" /><circle cx="18" cy="18.500" r="1.500" fill="#fff" stroke="none" /></svg>
        <span className="ml-[17px]">ENG</span>
        <div className="ml-[25px] w-[74px] text-center leading-[28px]"><p>4:25 PM</p><p>7/6/2017</p></div>
        <button aria-label="20 notifications" className="relative ml-[32px] mr-[31px] h-12 w-6">
          <svg viewBox="0 0 24 24" className="h-6 w-6"><path d="M0 0h24v19H10l-5 5v-5H0z" fill="#fff" /><path d="M4 6h16M4 10h16M4 14h10" stroke="#2a0344" strokeWidth="1.500" /></svg>
          <span className="absolute -bottom-px left-[9px] flex h-7 w-7 items-center justify-center rounded-full border border-[#a98bc0] bg-[#5a2a85] text-[16px] font-semibold leading-none">20</span>
        </button>
        <span className="mr-[6px] h-full w-px bg-[#8b74a0]" />
      </div>
    </footer>
  );
}

/* ---------- page ---------- */

export default function App() {
  return (
    <div className="relative flex h-screen w-full flex-col overflow-hidden bg-[#efefef]">
      <header className="flex h-9 shrink-0 items-start justify-between border-b border-[#cfcfcf] bg-white">
        <Palette className="mt-1 h-5 w-5" />
        <WinControls restore tone="text-[#8a8a8a]" className="mr-px pb-[3px]" />
      </header>
      <div className="h-[30px] shrink-0 border-b border-[#9d9d9d] bg-white" />
      <div className="h-[42px] shrink-0 border-b border-[#8e8e8e] bg-[#efefef]" />

      <main className="isolate flex min-h-0 flex-1">
        <ToolPalette />
        <div className="flex min-w-0 flex-1 flex-col border-l-4 border-t-[3px] border-[#5f5f5f]"><DocumentWindow /></div>
        <ColorPalette />
      </main>

      <div className={`flex h-[31px] shrink-0 items-end justify-between border-t border-[#a5a5a5] bg-[#efefef] text-[17px] leading-6 text-[#222] ${UI}`}>
        <span className="pl-3">(613, 442)</span>
        <span className="w-[352px] whitespace-pre border-l-2 border-t-2 border-[#9b9b9b] pl-0.5">Image:  1224 x 988 x 16 Million - 3.4 MBytes</span>
      </div>
      <Taskbar />

      <FloatingTitle className="right-[96px] top-[80px]">Tool Options - Zoom</FloatingTitle>
      <FloatingTitle className="bottom-[187px] right-[5px]">Layer Palette - Backgro...</FloatingTitle>
      <FirefoxWindow />
    </div>
  );
}
